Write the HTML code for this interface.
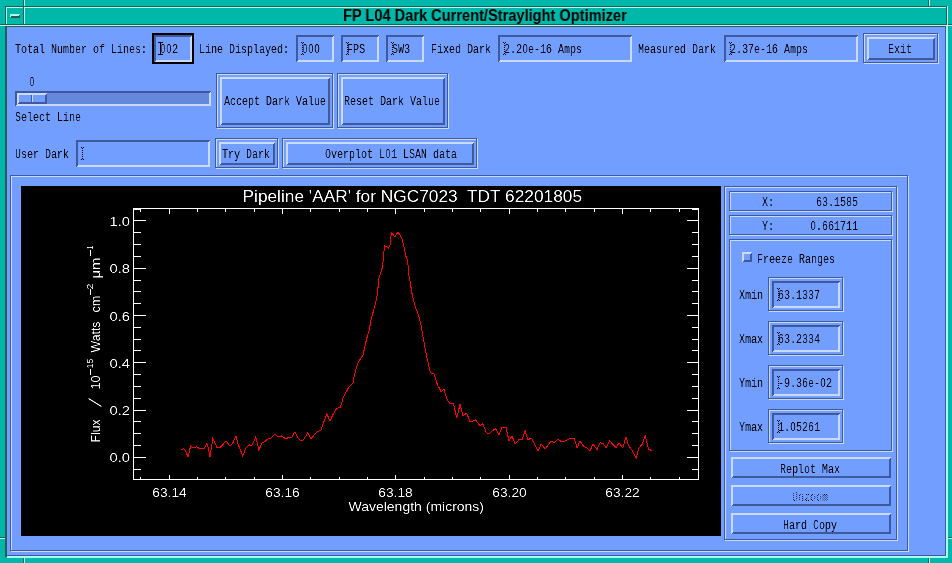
<!DOCTYPE html>
<html><head><meta charset="utf-8"><style>
html,body{margin:0;padding:0;}
body{width:952px;height:563px;overflow:hidden;position:relative;background:#00B8AA;}
body>div{position:absolute;}
.m{font-family:"Liberation Mono",monospace;font-size:13.66px;line-height:16px;white-space:pre;transform-origin:0 0;transform:scaleX(0.7319);will-change:transform;filter:url(#crisp);}
.z{display:inline-block;vertical-align:baseline;line-height:0;width:8.1973px;text-align:center;font-family:"Liberation Sans",sans-serif;font-size:12.5px;}
.w{-webkit-mask-image:conic-gradient(#000 0 25%,transparent 0 50%,#000 0 75%,transparent 0);-webkit-mask-size:2px 2px;mask-image:conic-gradient(#000 0 25%,transparent 0 50%,#000 0 75%,transparent 0);mask-size:2px 2px;}
.w>div{position:absolute;}
.t{font-family:"Liberation Sans",sans-serif;font-weight:bold;font-size:15.5px;line-height:18px;white-space:pre;color:#000;transform-origin:0 0;transform:scale(0.942,1.04);will-change:transform;}
</style></head><body>
<svg width="0" height="0" style="position:absolute"><filter id="crisp" color-interpolation-filters="sRGB"><feComponentTransfer><feFuncA type="linear" slope="1.4" intercept="-0.2"/></feComponentTransfer></filter></svg>
<div style="left:0px;top:0px;width:952px;height:563px;background:#00B8AA;"></div>
<div style="left:23px;top:0px;width:1px;height:6px;background:#2C5A55;"></div>
<div style="left:24px;top:0px;width:1px;height:6px;background:#A8FFF0;"></div>
<div style="left:928px;top:0px;width:1px;height:6px;background:#2C5A55;"></div>
<div style="left:929px;top:0px;width:1px;height:6px;background:#A8FFF0;"></div>
<div style="left:5px;top:6px;width:942px;height:1px;background:#2C5A55;"></div>
<div style="left:6px;top:7px;width:941px;height:1px;background:#A8FFF0;"></div>
<div style="left:5px;top:6px;width:1px;height:19px;background:#2C5A55;"></div>
<div style="left:6px;top:7px;width:1px;height:18px;background:#A8FFF0;"></div>
<div style="left:23px;top:7px;width:1px;height:18px;background:#2C5A55;"></div>
<div style="left:24px;top:7px;width:1px;height:18px;background:#A8FFF0;"></div>
<div style="left:946px;top:6px;width:1px;height:19px;background:#2C5A55;"></div>
<div style="left:947px;top:6px;width:1px;height:552px;background:#A8FFF0;"></div>
<div style="left:0px;top:24px;width:952px;height:1px;background:#2C5A55;"></div>
<div style="left:0px;top:25px;width:952px;height:1px;background:#A8FFF0;"></div>
<div style="left:947px;top:6px;width:1px;height:552px;background:#A8FFF0;"></div>
<div style="left:10px;top:14px;width:10px;height:2px;background:#A8FFF0;"></div>
<div style="left:11px;top:16px;width:9px;height:2px;background:#2C5A55;"></div>
<div style="left:10px;top:16px;width:1px;height:1px;background:#A8FFF0;"></div>
<div style="left:19px;top:15px;width:1px;height:1px;background:#2C5A55;"></div>
<div style="left:5px;top:26px;width:941px;height:1px;background:#2C5A55;"></div>
<div style="left:5px;top:26px;width:2px;height:531px;background:#2C5A55;"></div>
<div style="left:7px;top:27px;width:938px;height:528px;background:#729FFF;"></div>
<div style="left:945px;top:27px;width:1px;height:529px;background:#3E5A9C;"></div>
<div style="left:7px;top:555px;width:939px;height:1px;background:#3E5A9C;"></div>
<div style="left:946px;top:26px;width:1px;height:532px;background:#A8FFF0;"></div>
<div style="left:7px;top:556px;width:941px;height:1px;background:#A8FFF0;"></div>
<div style="left:7px;top:557px;width:941px;height:1px;background:#A8FFF0;"></div>
<div style="left:5px;top:557px;width:2px;height:1px;background:#00B8AA;"></div>
<div style="left:0px;top:538px;width:5px;height:1px;background:#A8FFF0;"></div>
<div style="left:0px;top:537px;width:5px;height:1px;background:#2C5A55;"></div>
<div style="left:948px;top:538px;width:4px;height:1px;background:#A8FFF0;"></div>
<div style="left:948px;top:537px;width:4px;height:1px;background:#2C5A55;"></div>
<div style="left:23px;top:558px;width:1px;height:5px;background:#2C5A55;"></div>
<div style="left:24px;top:558px;width:1px;height:5px;background:#A8FFF0;"></div>
<div style="left:928px;top:558px;width:1px;height:5px;background:#2C5A55;"></div>
<div style="left:929px;top:558px;width:1px;height:5px;background:#A8FFF0;"></div>
<div class="t" style="left:343px;top:6px;">FP L04 Dark Current/Straylight Optimizer</div>
<div class="m" style="left:14.5px;top:42px;color:#000;">Total&nbsp;Number&nbsp;of&nbsp;Lines:</div>
<div style="left:152px;top:33px;width:42px;height:1px;background:#000;"></div>
<div style="left:152px;top:33px;width:1px;height:31px;background:#000;"></div>
<div style="left:153px;top:63px;width:41px;height:1px;background:#000;"></div>
<div style="left:193px;top:34px;width:1px;height:30px;background:#000;"></div>
<div style="left:153px;top:34px;width:40px;height:1px;background:#000;"></div>
<div style="left:153px;top:34px;width:1px;height:29px;background:#000;"></div>
<div style="left:154px;top:62px;width:39px;height:1px;background:#000;"></div>
<div style="left:192px;top:35px;width:1px;height:28px;background:#000;"></div>
<div style="left:154px;top:35px;width:38px;height:1px;background:#3E5A9C;"></div>
<div style="left:154px;top:35px;width:1px;height:27px;background:#3E5A9C;"></div>
<div style="left:155px;top:61px;width:37px;height:1px;background:#CADAFF;"></div>
<div style="left:191px;top:36px;width:1px;height:26px;background:#CADAFF;"></div>
<div style="left:155px;top:36px;width:36px;height:1px;background:#3E5A9C;"></div>
<div style="left:155px;top:36px;width:1px;height:25px;background:#3E5A9C;"></div>
<div style="left:156px;top:60px;width:35px;height:1px;background:#CADAFF;"></div>
<div style="left:190px;top:37px;width:1px;height:24px;background:#CADAFF;"></div>
<div class="m" style="left:159.5px;top:42px;color:#000;"><span class="z">0</span><span class="z">0</span>2</div>
<div style="left:158px;top:42px;width:5px;height:1px;background:#000;"></div>
<div style="left:158px;top:54px;width:5px;height:1px;background:#000;"></div>
<div style="left:160px;top:42px;width:1px;height:13px;background:#000;"></div>
<div class="m" style="left:198.5px;top:42px;color:#000;">Line&nbsp;Displayed:</div>
<div style="left:296px;top:35px;width:38px;height:1px;background:#3E5A9C;"></div>
<div style="left:296px;top:35px;width:1px;height:27px;background:#3E5A9C;"></div>
<div style="left:297px;top:61px;width:37px;height:1px;background:#CADAFF;"></div>
<div style="left:333px;top:36px;width:1px;height:26px;background:#CADAFF;"></div>
<div style="left:297px;top:36px;width:36px;height:1px;background:#3E5A9C;"></div>
<div style="left:297px;top:36px;width:1px;height:25px;background:#3E5A9C;"></div>
<div style="left:298px;top:60px;width:35px;height:1px;background:#CADAFF;"></div>
<div style="left:332px;top:37px;width:1px;height:24px;background:#CADAFF;"></div>
<div class="m" style="left:301.5px;top:42px;color:#000;"><span class="z">0</span><span class="z">0</span><span class="z">0</span></div>
<div style="left:301px;top:42px;width:1px;height:1px;background:#000;"></div>
<div style="left:303px;top:42px;width:1px;height:1px;background:#000;"></div>
<div style="left:302px;top:43px;width:1px;height:1px;background:#000;"></div>
<div style="left:302px;top:45px;width:1px;height:1px;background:#000;"></div>
<div style="left:302px;top:47px;width:1px;height:1px;background:#000;"></div>
<div style="left:302px;top:49px;width:1px;height:1px;background:#000;"></div>
<div style="left:302px;top:51px;width:1px;height:1px;background:#000;"></div>
<div style="left:302px;top:53px;width:1px;height:1px;background:#000;"></div>
<div style="left:301px;top:54px;width:1px;height:1px;background:#000;"></div>
<div style="left:303px;top:54px;width:1px;height:1px;background:#000;"></div>
<div style="left:341px;top:35px;width:38px;height:1px;background:#3E5A9C;"></div>
<div style="left:341px;top:35px;width:1px;height:27px;background:#3E5A9C;"></div>
<div style="left:342px;top:61px;width:37px;height:1px;background:#CADAFF;"></div>
<div style="left:378px;top:36px;width:1px;height:26px;background:#CADAFF;"></div>
<div style="left:342px;top:36px;width:36px;height:1px;background:#3E5A9C;"></div>
<div style="left:342px;top:36px;width:1px;height:25px;background:#3E5A9C;"></div>
<div style="left:343px;top:60px;width:35px;height:1px;background:#CADAFF;"></div>
<div style="left:377px;top:37px;width:1px;height:24px;background:#CADAFF;"></div>
<div class="m" style="left:346.5px;top:42px;color:#000;">FPS</div>
<div style="left:346px;top:42px;width:1px;height:1px;background:#000;"></div>
<div style="left:348px;top:42px;width:1px;height:1px;background:#000;"></div>
<div style="left:347px;top:43px;width:1px;height:1px;background:#000;"></div>
<div style="left:347px;top:45px;width:1px;height:1px;background:#000;"></div>
<div style="left:347px;top:47px;width:1px;height:1px;background:#000;"></div>
<div style="left:347px;top:49px;width:1px;height:1px;background:#000;"></div>
<div style="left:347px;top:51px;width:1px;height:1px;background:#000;"></div>
<div style="left:347px;top:53px;width:1px;height:1px;background:#000;"></div>
<div style="left:346px;top:54px;width:1px;height:1px;background:#000;"></div>
<div style="left:348px;top:54px;width:1px;height:1px;background:#000;"></div>
<div style="left:386px;top:35px;width:38px;height:1px;background:#3E5A9C;"></div>
<div style="left:386px;top:35px;width:1px;height:27px;background:#3E5A9C;"></div>
<div style="left:387px;top:61px;width:37px;height:1px;background:#CADAFF;"></div>
<div style="left:423px;top:36px;width:1px;height:26px;background:#CADAFF;"></div>
<div style="left:387px;top:36px;width:36px;height:1px;background:#3E5A9C;"></div>
<div style="left:387px;top:36px;width:1px;height:25px;background:#3E5A9C;"></div>
<div style="left:388px;top:60px;width:35px;height:1px;background:#CADAFF;"></div>
<div style="left:422px;top:37px;width:1px;height:24px;background:#CADAFF;"></div>
<div class="m" style="left:391.5px;top:42px;color:#000;">SW3</div>
<div style="left:391px;top:42px;width:1px;height:1px;background:#000;"></div>
<div style="left:393px;top:42px;width:1px;height:1px;background:#000;"></div>
<div style="left:392px;top:43px;width:1px;height:1px;background:#000;"></div>
<div style="left:392px;top:45px;width:1px;height:1px;background:#000;"></div>
<div style="left:392px;top:47px;width:1px;height:1px;background:#000;"></div>
<div style="left:392px;top:49px;width:1px;height:1px;background:#000;"></div>
<div style="left:392px;top:51px;width:1px;height:1px;background:#000;"></div>
<div style="left:392px;top:53px;width:1px;height:1px;background:#000;"></div>
<div style="left:391px;top:54px;width:1px;height:1px;background:#000;"></div>
<div style="left:393px;top:54px;width:1px;height:1px;background:#000;"></div>
<div class="m" style="left:430.5px;top:42px;color:#000;">Fixed&nbsp;Dark</div>
<div style="left:498px;top:35px;width:134px;height:1px;background:#3E5A9C;"></div>
<div style="left:498px;top:35px;width:1px;height:27px;background:#3E5A9C;"></div>
<div style="left:499px;top:61px;width:133px;height:1px;background:#CADAFF;"></div>
<div style="left:631px;top:36px;width:1px;height:26px;background:#CADAFF;"></div>
<div style="left:499px;top:36px;width:132px;height:1px;background:#3E5A9C;"></div>
<div style="left:499px;top:36px;width:1px;height:25px;background:#3E5A9C;"></div>
<div style="left:500px;top:60px;width:131px;height:1px;background:#CADAFF;"></div>
<div style="left:630px;top:37px;width:1px;height:24px;background:#CADAFF;"></div>
<div class="m" style="left:503.5px;top:42px;color:#000;">2.2<span class="z">0</span>e-16&nbsp;Amps</div>
<div style="left:503px;top:42px;width:1px;height:1px;background:#000;"></div>
<div style="left:505px;top:42px;width:1px;height:1px;background:#000;"></div>
<div style="left:504px;top:43px;width:1px;height:1px;background:#000;"></div>
<div style="left:504px;top:45px;width:1px;height:1px;background:#000;"></div>
<div style="left:504px;top:47px;width:1px;height:1px;background:#000;"></div>
<div style="left:504px;top:49px;width:1px;height:1px;background:#000;"></div>
<div style="left:504px;top:51px;width:1px;height:1px;background:#000;"></div>
<div style="left:504px;top:53px;width:1px;height:1px;background:#000;"></div>
<div style="left:503px;top:54px;width:1px;height:1px;background:#000;"></div>
<div style="left:505px;top:54px;width:1px;height:1px;background:#000;"></div>
<div class="m" style="left:637.5px;top:42px;color:#000;">Measured&nbsp;Dark</div>
<div style="left:724px;top:35px;width:134px;height:1px;background:#3E5A9C;"></div>
<div style="left:724px;top:35px;width:1px;height:27px;background:#3E5A9C;"></div>
<div style="left:725px;top:61px;width:133px;height:1px;background:#CADAFF;"></div>
<div style="left:857px;top:36px;width:1px;height:26px;background:#CADAFF;"></div>
<div style="left:725px;top:36px;width:132px;height:1px;background:#3E5A9C;"></div>
<div style="left:725px;top:36px;width:1px;height:25px;background:#3E5A9C;"></div>
<div style="left:726px;top:60px;width:131px;height:1px;background:#CADAFF;"></div>
<div style="left:856px;top:37px;width:1px;height:24px;background:#CADAFF;"></div>
<div class="m" style="left:729.5px;top:42px;color:#000;">2.37e-16&nbsp;Amps</div>
<div style="left:729px;top:42px;width:1px;height:1px;background:#000;"></div>
<div style="left:731px;top:42px;width:1px;height:1px;background:#000;"></div>
<div style="left:730px;top:43px;width:1px;height:1px;background:#000;"></div>
<div style="left:730px;top:45px;width:1px;height:1px;background:#000;"></div>
<div style="left:730px;top:47px;width:1px;height:1px;background:#000;"></div>
<div style="left:730px;top:49px;width:1px;height:1px;background:#000;"></div>
<div style="left:730px;top:51px;width:1px;height:1px;background:#000;"></div>
<div style="left:730px;top:53px;width:1px;height:1px;background:#000;"></div>
<div style="left:729px;top:54px;width:1px;height:1px;background:#000;"></div>
<div style="left:731px;top:54px;width:1px;height:1px;background:#000;"></div>
<div style="left:864px;top:34px;width:75px;height:1px;background:#CADAFF;"></div>
<div style="left:864px;top:34px;width:1px;height:30px;background:#CADAFF;"></div>
<div style="left:864px;top:63px;width:75px;height:1px;background:#CADAFF;"></div>
<div style="left:938px;top:34px;width:1px;height:30px;background:#CADAFF;"></div>
<div style="left:863px;top:33px;width:75px;height:1px;background:#3E5A9C;"></div>
<div style="left:863px;top:33px;width:1px;height:30px;background:#3E5A9C;"></div>
<div style="left:863px;top:62px;width:75px;height:1px;background:#3E5A9C;"></div>
<div style="left:937px;top:33px;width:1px;height:30px;background:#3E5A9C;"></div>
<div style="left:867px;top:37px;width:68px;height:1px;background:#CADAFF;"></div>
<div style="left:867px;top:37px;width:1px;height:23px;background:#CADAFF;"></div>
<div style="left:868px;top:59px;width:67px;height:1px;background:#3E5A9C;"></div>
<div style="left:934px;top:38px;width:1px;height:22px;background:#3E5A9C;"></div>
<div style="left:868px;top:38px;width:66px;height:1px;background:#CADAFF;"></div>
<div style="left:868px;top:38px;width:1px;height:21px;background:#CADAFF;"></div>
<div style="left:869px;top:58px;width:65px;height:1px;background:#3E5A9C;"></div>
<div style="left:933px;top:39px;width:1px;height:20px;background:#3E5A9C;"></div>
<div class="m" style="left:887.5px;top:42px;color:#000;">Exit</div>
<div class="m" style="left:28.5px;top:75px;color:#000;"><span class="z">0</span></div>
<div style="left:15px;top:91px;width:196px;height:1px;background:#3E5A9C;"></div>
<div style="left:15px;top:91px;width:1px;height:15px;background:#3E5A9C;"></div>
<div style="left:16px;top:105px;width:195px;height:1px;background:#CADAFF;"></div>
<div style="left:210px;top:92px;width:1px;height:14px;background:#CADAFF;"></div>
<div style="left:16px;top:92px;width:194px;height:1px;background:#3E5A9C;"></div>
<div style="left:16px;top:92px;width:1px;height:13px;background:#3E5A9C;"></div>
<div style="left:17px;top:104px;width:193px;height:1px;background:#CADAFF;"></div>
<div style="left:209px;top:93px;width:1px;height:12px;background:#CADAFF;"></div>
<div style="left:17px;top:93px;width:192px;height:11px;background:#6488DC;"></div>
<div style="left:17px;top:93px;width:30px;height:11px;background:#729FFF;"></div>
<div style="left:17px;top:93px;width:30px;height:1px;background:#CADAFF;"></div>
<div style="left:17px;top:93px;width:1px;height:11px;background:#CADAFF;"></div>
<div style="left:18px;top:103px;width:29px;height:1px;background:#3E5A9C;"></div>
<div style="left:46px;top:94px;width:1px;height:10px;background:#3E5A9C;"></div>
<div style="left:18px;top:94px;width:28px;height:1px;background:#CADAFF;"></div>
<div style="left:18px;top:94px;width:1px;height:9px;background:#CADAFF;"></div>
<div style="left:19px;top:102px;width:27px;height:1px;background:#3E5A9C;"></div>
<div style="left:45px;top:95px;width:1px;height:8px;background:#3E5A9C;"></div>
<div style="left:31px;top:95px;width:1px;height:7px;background:#3E5A9C;"></div>
<div style="left:32px;top:95px;width:1px;height:7px;background:#CADAFF;"></div>
<div class="m" style="left:14.5px;top:110px;color:#000;">Select&nbsp;Line</div>
<div style="left:217px;top:74px;width:117px;height:1px;background:#CADAFF;"></div>
<div style="left:217px;top:74px;width:1px;height:55px;background:#CADAFF;"></div>
<div style="left:217px;top:128px;width:117px;height:1px;background:#CADAFF;"></div>
<div style="left:333px;top:74px;width:1px;height:55px;background:#CADAFF;"></div>
<div style="left:216px;top:73px;width:117px;height:1px;background:#3E5A9C;"></div>
<div style="left:216px;top:73px;width:1px;height:55px;background:#3E5A9C;"></div>
<div style="left:216px;top:127px;width:117px;height:1px;background:#3E5A9C;"></div>
<div style="left:332px;top:73px;width:1px;height:55px;background:#3E5A9C;"></div>
<div style="left:220px;top:77px;width:110px;height:1px;background:#CADAFF;"></div>
<div style="left:220px;top:77px;width:1px;height:48px;background:#CADAFF;"></div>
<div style="left:221px;top:124px;width:109px;height:1px;background:#3E5A9C;"></div>
<div style="left:329px;top:78px;width:1px;height:47px;background:#3E5A9C;"></div>
<div style="left:221px;top:78px;width:108px;height:1px;background:#CADAFF;"></div>
<div style="left:221px;top:78px;width:1px;height:46px;background:#CADAFF;"></div>
<div style="left:222px;top:123px;width:107px;height:1px;background:#3E5A9C;"></div>
<div style="left:328px;top:79px;width:1px;height:45px;background:#3E5A9C;"></div>
<div class="m" style="left:223.5px;top:94px;color:#000;">Accept&nbsp;Dark&nbsp;Value</div>
<div style="left:338px;top:74px;width:111px;height:1px;background:#CADAFF;"></div>
<div style="left:338px;top:74px;width:1px;height:55px;background:#CADAFF;"></div>
<div style="left:338px;top:128px;width:111px;height:1px;background:#CADAFF;"></div>
<div style="left:448px;top:74px;width:1px;height:55px;background:#CADAFF;"></div>
<div style="left:337px;top:73px;width:111px;height:1px;background:#3E5A9C;"></div>
<div style="left:337px;top:73px;width:1px;height:55px;background:#3E5A9C;"></div>
<div style="left:337px;top:127px;width:111px;height:1px;background:#3E5A9C;"></div>
<div style="left:447px;top:73px;width:1px;height:55px;background:#3E5A9C;"></div>
<div style="left:341px;top:77px;width:104px;height:1px;background:#CADAFF;"></div>
<div style="left:341px;top:77px;width:1px;height:48px;background:#CADAFF;"></div>
<div style="left:342px;top:124px;width:103px;height:1px;background:#3E5A9C;"></div>
<div style="left:444px;top:78px;width:1px;height:47px;background:#3E5A9C;"></div>
<div style="left:342px;top:78px;width:102px;height:1px;background:#CADAFF;"></div>
<div style="left:342px;top:78px;width:1px;height:46px;background:#CADAFF;"></div>
<div style="left:343px;top:123px;width:101px;height:1px;background:#3E5A9C;"></div>
<div style="left:443px;top:79px;width:1px;height:45px;background:#3E5A9C;"></div>
<div class="m" style="left:343.5px;top:94px;color:#000;">Reset&nbsp;Dark&nbsp;Value</div>
<div class="m" style="left:14.5px;top:147px;color:#000;">User&nbsp;Dark</div>
<div style="left:76px;top:140px;width:134px;height:1px;background:#3E5A9C;"></div>
<div style="left:76px;top:140px;width:1px;height:27px;background:#3E5A9C;"></div>
<div style="left:77px;top:166px;width:133px;height:1px;background:#CADAFF;"></div>
<div style="left:209px;top:141px;width:1px;height:26px;background:#CADAFF;"></div>
<div style="left:77px;top:141px;width:132px;height:1px;background:#3E5A9C;"></div>
<div style="left:77px;top:141px;width:1px;height:25px;background:#3E5A9C;"></div>
<div style="left:78px;top:165px;width:131px;height:1px;background:#CADAFF;"></div>
<div style="left:208px;top:142px;width:1px;height:24px;background:#CADAFF;"></div>
<div class="m" style="left:81.5px;top:147px;color:#000;"></div>
<div style="left:81px;top:147px;width:1px;height:1px;background:#000;"></div>
<div style="left:83px;top:147px;width:1px;height:1px;background:#000;"></div>
<div style="left:82px;top:148px;width:1px;height:1px;background:#000;"></div>
<div style="left:82px;top:150px;width:1px;height:1px;background:#000;"></div>
<div style="left:82px;top:152px;width:1px;height:1px;background:#000;"></div>
<div style="left:82px;top:154px;width:1px;height:1px;background:#000;"></div>
<div style="left:82px;top:156px;width:1px;height:1px;background:#000;"></div>
<div style="left:82px;top:158px;width:1px;height:1px;background:#000;"></div>
<div style="left:81px;top:159px;width:1px;height:1px;background:#000;"></div>
<div style="left:83px;top:159px;width:1px;height:1px;background:#000;"></div>
<div style="left:216px;top:139px;width:63px;height:1px;background:#CADAFF;"></div>
<div style="left:216px;top:139px;width:1px;height:30px;background:#CADAFF;"></div>
<div style="left:216px;top:168px;width:63px;height:1px;background:#CADAFF;"></div>
<div style="left:278px;top:139px;width:1px;height:30px;background:#CADAFF;"></div>
<div style="left:215px;top:138px;width:63px;height:1px;background:#3E5A9C;"></div>
<div style="left:215px;top:138px;width:1px;height:30px;background:#3E5A9C;"></div>
<div style="left:215px;top:167px;width:63px;height:1px;background:#3E5A9C;"></div>
<div style="left:277px;top:138px;width:1px;height:30px;background:#3E5A9C;"></div>
<div style="left:219px;top:142px;width:56px;height:1px;background:#CADAFF;"></div>
<div style="left:219px;top:142px;width:1px;height:23px;background:#CADAFF;"></div>
<div style="left:220px;top:164px;width:55px;height:1px;background:#3E5A9C;"></div>
<div style="left:274px;top:143px;width:1px;height:22px;background:#3E5A9C;"></div>
<div style="left:220px;top:143px;width:54px;height:1px;background:#CADAFF;"></div>
<div style="left:220px;top:143px;width:1px;height:21px;background:#CADAFF;"></div>
<div style="left:221px;top:163px;width:53px;height:1px;background:#3E5A9C;"></div>
<div style="left:273px;top:144px;width:1px;height:20px;background:#3E5A9C;"></div>
<div class="m" style="left:221.5px;top:147px;color:#000;">Try&nbsp;Dark</div>
<div style="left:283px;top:139px;width:195px;height:1px;background:#CADAFF;"></div>
<div style="left:283px;top:139px;width:1px;height:30px;background:#CADAFF;"></div>
<div style="left:283px;top:168px;width:195px;height:1px;background:#CADAFF;"></div>
<div style="left:477px;top:139px;width:1px;height:30px;background:#CADAFF;"></div>
<div style="left:282px;top:138px;width:195px;height:1px;background:#3E5A9C;"></div>
<div style="left:282px;top:138px;width:1px;height:30px;background:#3E5A9C;"></div>
<div style="left:282px;top:167px;width:195px;height:1px;background:#3E5A9C;"></div>
<div style="left:476px;top:138px;width:1px;height:30px;background:#3E5A9C;"></div>
<div style="left:286px;top:142px;width:188px;height:1px;background:#CADAFF;"></div>
<div style="left:286px;top:142px;width:1px;height:23px;background:#CADAFF;"></div>
<div style="left:287px;top:164px;width:187px;height:1px;background:#3E5A9C;"></div>
<div style="left:473px;top:143px;width:1px;height:22px;background:#3E5A9C;"></div>
<div style="left:287px;top:143px;width:186px;height:1px;background:#CADAFF;"></div>
<div style="left:287px;top:143px;width:1px;height:21px;background:#CADAFF;"></div>
<div style="left:288px;top:163px;width:185px;height:1px;background:#3E5A9C;"></div>
<div style="left:472px;top:144px;width:1px;height:20px;background:#3E5A9C;"></div>
<div class="m" style="left:324.5px;top:147px;color:#000;">Overplot&nbsp;L<span class="z">0</span>1&nbsp;LSAN&nbsp;data</div>
<div style="left:11px;top:176px;width:898px;height:1px;background:#CADAFF;"></div>
<div style="left:11px;top:176px;width:1px;height:376px;background:#CADAFF;"></div>
<div style="left:11px;top:551px;width:898px;height:1px;background:#CADAFF;"></div>
<div style="left:908px;top:176px;width:1px;height:376px;background:#CADAFF;"></div>
<div style="left:10px;top:175px;width:898px;height:1px;background:#3E5A9C;"></div>
<div style="left:10px;top:175px;width:1px;height:376px;background:#3E5A9C;"></div>
<div style="left:10px;top:550px;width:898px;height:1px;background:#3E5A9C;"></div>
<div style="left:907px;top:175px;width:1px;height:376px;background:#3E5A9C;"></div>
<div style="left:21px;top:186px;width:700px;height:350px;background:#000;"></div>
<svg style="position:absolute;left:21px;top:186px" width="700" height="350" viewBox="21 186 700 350"><path d="M133.5 208.5H698.5V479.5H133.5Z M140.5 479.5V476.5 M140.5 208.5V211.5 M169.5 479.5V474.5 M169.5 208.5V213.5 M197.5 479.5V476.5 M197.5 208.5V211.5 M225.5 479.5V476.5 M225.5 208.5V211.5 M254.5 479.5V476.5 M254.5 208.5V211.5 M282.5 479.5V474.5 M282.5 208.5V213.5 M310.5 479.5V476.5 M310.5 208.5V211.5 M339.5 479.5V476.5 M339.5 208.5V211.5 M367.5 479.5V476.5 M367.5 208.5V211.5 M395.5 479.5V474.5 M395.5 208.5V213.5 M424.5 479.5V476.5 M424.5 208.5V211.5 M452.5 479.5V476.5 M452.5 208.5V211.5 M480.5 479.5V476.5 M480.5 208.5V211.5 M509.5 479.5V474.5 M509.5 208.5V213.5 M537.5 479.5V476.5 M537.5 208.5V211.5 M565.5 479.5V476.5 M565.5 208.5V211.5 M594.5 479.5V476.5 M594.5 208.5V211.5 M622.5 479.5V474.5 M622.5 208.5V213.5 M650.5 479.5V476.5 M650.5 208.5V211.5 M679.5 479.5V476.5 M679.5 208.5V211.5 M133.5 469.5H140.5 M698.5 469.5H691.5 M133.5 457.5H145.5 M698.5 457.5H686.5 M133.5 445.5H140.5 M698.5 445.5H691.5 M133.5 433.5H140.5 M698.5 433.5H691.5 M133.5 421.5H140.5 M698.5 421.5H691.5 M133.5 410.5H145.5 M698.5 410.5H686.5 M133.5 398.5H140.5 M698.5 398.5H691.5 M133.5 386.5H140.5 M698.5 386.5H691.5 M133.5 374.5H140.5 M698.5 374.5H691.5 M133.5 362.5H145.5 M698.5 362.5H686.5 M133.5 350.5H140.5 M698.5 350.5H691.5 M133.5 339.5H140.5 M698.5 339.5H691.5 M133.5 327.5H140.5 M698.5 327.5H691.5 M133.5 315.5H145.5 M698.5 315.5H686.5 M133.5 303.5H140.5 M698.5 303.5H691.5 M133.5 291.5H140.5 M698.5 291.5H691.5 M133.5 280.5H140.5 M698.5 280.5H691.5 M133.5 268.5H145.5 M698.5 268.5H686.5 M133.5 256.5H140.5 M698.5 256.5H691.5 M133.5 244.5H140.5 M698.5 244.5H691.5 M133.5 232.5H140.5 M698.5 232.5H691.5 M133.5 220.5H145.5 M698.5 220.5H686.5 M133.5 209.5H140.5 M698.5 209.5H691.5" stroke="#fff" stroke-width="1" fill="none" shape-rendering="crispEdges"/><filter id="ptxt" color-interpolation-filters="sRGB"><feComponentTransfer><feFuncA type="linear" slope="1.5" intercept="-0.35"/></feComponentTransfer></filter><g filter="url(#ptxt)"><text x="242.5" y="202" font-family="Liberation Sans" fill="#fff" font-size="16" textLength="339.5" lengthAdjust="spacingAndGlyphs">Pipeline 'AAR' for NGC7023&#160; TDT 62201805</text><text x="169.5" y="497" font-family="Liberation Sans" fill="#fff" font-size="13" text-anchor="middle" textLength="34.5" lengthAdjust="spacingAndGlyphs">63.14</text><text x="282.5" y="497" font-family="Liberation Sans" fill="#fff" font-size="13" text-anchor="middle" textLength="34.5" lengthAdjust="spacingAndGlyphs">63.16</text><text x="395.5" y="497" font-family="Liberation Sans" fill="#fff" font-size="13" text-anchor="middle" textLength="34.5" lengthAdjust="spacingAndGlyphs">63.18</text><text x="509.5" y="497" font-family="Liberation Sans" fill="#fff" font-size="13" text-anchor="middle" textLength="34.5" lengthAdjust="spacingAndGlyphs">63.20</text><text x="622.5" y="497" font-family="Liberation Sans" fill="#fff" font-size="13" text-anchor="middle" textLength="34.5" lengthAdjust="spacingAndGlyphs">63.22</text><text x="130" y="462" font-family="Liberation Sans" fill="#fff" font-size="13" text-anchor="end" textLength="20.5" lengthAdjust="spacingAndGlyphs">0.0</text><text x="130" y="415" font-family="Liberation Sans" fill="#fff" font-size="13" text-anchor="end" textLength="20.5" lengthAdjust="spacingAndGlyphs">0.2</text><text x="130" y="368" font-family="Liberation Sans" fill="#fff" font-size="13" text-anchor="end" textLength="20.5" lengthAdjust="spacingAndGlyphs">0.4</text><text x="130" y="321" font-family="Liberation Sans" fill="#fff" font-size="13" text-anchor="end" textLength="20.5" lengthAdjust="spacingAndGlyphs">0.6</text><text x="130" y="273" font-family="Liberation Sans" fill="#fff" font-size="13" text-anchor="end" textLength="20.5" lengthAdjust="spacingAndGlyphs">0.8</text><text x="130" y="226" font-family="Liberation Sans" fill="#fff" font-size="13" text-anchor="end" textLength="20.5" lengthAdjust="spacingAndGlyphs">1.0</text><text x="348.5" y="511" font-family="Liberation Sans" fill="#fff" font-size="13" textLength="135.5" lengthAdjust="spacingAndGlyphs">Wavelength (microns)</text><text transform="translate(99.6 442.5) rotate(-90)" font-family="Liberation Sans" fill="#fff" font-size="12.5" textLength="23" lengthAdjust="spacingAndGlyphs">Flux</text><text transform="translate(99.6 389.5) rotate(-90)" font-family="Liberation Sans" fill="#fff" font-size="12.5" textLength="14" lengthAdjust="spacingAndGlyphs">10</text><text transform="translate(99.6 352.5) rotate(-90)" font-family="Liberation Sans" fill="#fff" font-size="12.5" textLength="31" lengthAdjust="spacingAndGlyphs">Watts</text><text transform="translate(99.6 312.5) rotate(-90)" font-family="Liberation Sans" fill="#fff" font-size="12.5" textLength="17" lengthAdjust="spacingAndGlyphs">cm</text><text transform="translate(99.6 278.5) rotate(-90)" font-family="Liberation Sans" fill="#fff" font-size="12.5" textLength="21" lengthAdjust="spacingAndGlyphs">μm</text><text transform="translate(93.3 368.5) rotate(-90)" font-family="Liberation Sans" fill="#fff" font-size="8.5" textLength="10" lengthAdjust="spacingAndGlyphs">15</text><text transform="translate(93.3 289.5) rotate(-90)" font-family="Liberation Sans" fill="#fff" font-size="8.5" textLength="6" lengthAdjust="spacingAndGlyphs">2</text><text transform="translate(93.3 249.5) rotate(-90)" font-family="Liberation Sans" fill="#fff" font-size="8.5" textLength="4" lengthAdjust="spacingAndGlyphs">1</text><path d="M88.5 398.5L101.5 406.5" stroke="#fff" stroke-width="1.1"/><path d="M90.5 369V375M90.5 289V295M90.5 250V256" stroke="#fff" stroke-width="1" shape-rendering="crispEdges"/></g><path d="M180.7 450.0 L183.5 448.7 L185.0 449.8 L188.0 456.9 L190.6 446.0 L193.9 447.9 L196.5 446.8 L200.1 448.9 L204.3 448.9 L206.9 443.2 L208.6 449.3 L210.0 456.9 L212.8 438.9 L214.3 441.3 L217.1 447.9 L219.9 447.9 L226.1 440.8 L229.8 446.0 L232.7 443.2 L236.0 436.1 L238.4 445.1 L242.8 455.9 L245.9 447.9 L249.2 444.9 L251.6 445.8 L255.8 437.0 L258.9 450.0 L262.0 443.2 L264.8 441.6 L267.4 439.4 L271.7 437.6 L274.9 433.9 L278.1 436.9 L281.3 435.8 L285.6 438.7 L287.7 437.9 L291.4 437.9 L294.8 432.0 L297.8 437.6 L301.0 441.1 L303.7 439.4 L307.9 432.8 L311.1 438.7 L316.5 432.3 L318.6 431.2 L321.1 430.1 L324.3 420.6 L326.8 413.8 L330.0 420.9 L332.9 414.6 L336.7 408.3 L340.4 407.1 L341.6 403.4 L342.9 398.4 L345.4 393.4 L349.1 386.6 L353.1 382.8 L354.1 376.6 L355.9 369.2 L357.8 363.6 L359.7 359.8 L362.8 355.5 L364.0 350.5 L366.6 339.0 L369.1 330.3 L371.5 317.8 L374.7 306.6 L376.5 299.2 L377.8 291.7 L378.4 280.2 L380.3 274.0 L382.2 267.8 L383.4 259.7 L384.0 251.0 L384.9 246.0 L386.8 246.6 L388.4 248.1 L390.0 244.8 L390.9 236.0 L391.9 232.9 L394.9 236.9 L398.0 231.9 L400.2 235.2 L402.1 239.2 L403.9 246.6 L405.8 255.9 L407.7 260.9 L408.9 275.2 L410.8 285.2 L411.3 290.5 L415.1 306.6 L418.2 314.1 L421.3 326.5 L423.2 337.7 L426.0 353.3 L426.7 356.7 L428.5 364.2 L430.4 372.9 L434.1 374.1 L437.2 384.1 L441.0 391.5 L444.1 389.3 L446.6 398.4 L450.1 404.0 L453.4 403.4 L456.8 418.3 L460.0 404.2 L463.0 415.6 L466.8 413.1 L470.0 421.9 L475.6 420.0 L480.0 425.7 L482.9 423.8 L486.4 432.7 L488.9 433.9 L493.3 430.1 L495.8 428.9 L499.0 434.5 L502.1 427.0 L505.9 427.0 L509.0 440.9 L512.0 435.8 L515.0 444.0 L519.1 439.6 L522.3 439.6 L525.1 430.8 L528.0 439.6 L531.7 438.1 L538.1 450.9 L541.2 444.0 L545.2 449.0 L551.0 441.1 L554.1 442.7 L558.2 439.0 L561.4 441.9 L564.5 441.5 L568.9 439.0 L574.3 438.7 L577.1 447.8 L580.0 440.9 L583.7 446.5 L586.9 447.8 L590.0 450.9 L592.9 444.0 L597.0 449.7 L600.1 442.7 L603.0 443.6 L606.1 447.8 L609.8 440.9 L616.1 447.8 L619.0 442.7 L622.8 447.8 L626.0 436.8 L628.5 445.3 L632.9 451.6 L636.1 458.3 L638.6 448.4 L642.4 444.0 L645.2 435.8 L648.4 449.0 L652.2 450.9" stroke="#f00" stroke-width="1" fill="none" shape-rendering="crispEdges"/></svg>
<div style="left:725px;top:187px;width:173px;height:1px;background:#CADAFF;"></div>
<div style="left:725px;top:187px;width:1px;height:354px;background:#CADAFF;"></div>
<div style="left:725px;top:540px;width:173px;height:1px;background:#CADAFF;"></div>
<div style="left:897px;top:187px;width:1px;height:354px;background:#CADAFF;"></div>
<div style="left:724px;top:186px;width:173px;height:1px;background:#3E5A9C;"></div>
<div style="left:724px;top:186px;width:1px;height:354px;background:#3E5A9C;"></div>
<div style="left:724px;top:539px;width:173px;height:1px;background:#3E5A9C;"></div>
<div style="left:896px;top:186px;width:1px;height:354px;background:#3E5A9C;"></div>
<div style="left:730px;top:192px;width:163px;height:1px;background:#CADAFF;"></div>
<div style="left:730px;top:192px;width:1px;height:20px;background:#CADAFF;"></div>
<div style="left:730px;top:211px;width:163px;height:1px;background:#CADAFF;"></div>
<div style="left:892px;top:192px;width:1px;height:20px;background:#CADAFF;"></div>
<div style="left:729px;top:191px;width:163px;height:1px;background:#3E5A9C;"></div>
<div style="left:729px;top:191px;width:1px;height:20px;background:#3E5A9C;"></div>
<div style="left:729px;top:210px;width:163px;height:1px;background:#3E5A9C;"></div>
<div style="left:891px;top:191px;width:1px;height:20px;background:#3E5A9C;"></div>
<div class="m" style="left:761.5px;top:195px;color:#000;">X:&nbsp;&nbsp;&nbsp;&nbsp;&nbsp;&nbsp;&nbsp;63.1585</div>
<div style="left:730px;top:216px;width:163px;height:1px;background:#CADAFF;"></div>
<div style="left:730px;top:216px;width:1px;height:20px;background:#CADAFF;"></div>
<div style="left:730px;top:235px;width:163px;height:1px;background:#CADAFF;"></div>
<div style="left:892px;top:216px;width:1px;height:20px;background:#CADAFF;"></div>
<div style="left:729px;top:215px;width:163px;height:1px;background:#3E5A9C;"></div>
<div style="left:729px;top:215px;width:1px;height:20px;background:#3E5A9C;"></div>
<div style="left:729px;top:234px;width:163px;height:1px;background:#3E5A9C;"></div>
<div style="left:891px;top:215px;width:1px;height:20px;background:#3E5A9C;"></div>
<div class="m" style="left:761.5px;top:219px;color:#000;">Y:&nbsp;&nbsp;&nbsp;&nbsp;&nbsp;&nbsp;<span class="z">0</span>.661711</div>
<div style="left:730px;top:240px;width:163px;height:1px;background:#CADAFF;"></div>
<div style="left:730px;top:240px;width:1px;height:212px;background:#CADAFF;"></div>
<div style="left:730px;top:451px;width:163px;height:1px;background:#CADAFF;"></div>
<div style="left:892px;top:240px;width:1px;height:212px;background:#CADAFF;"></div>
<div style="left:729px;top:239px;width:163px;height:1px;background:#3E5A9C;"></div>
<div style="left:729px;top:239px;width:1px;height:212px;background:#3E5A9C;"></div>
<div style="left:729px;top:450px;width:163px;height:1px;background:#3E5A9C;"></div>
<div style="left:891px;top:239px;width:1px;height:212px;background:#3E5A9C;"></div>
<div style="left:742px;top:252px;width:10px;height:1px;background:#CADAFF;"></div>
<div style="left:742px;top:252px;width:1px;height:10px;background:#CADAFF;"></div>
<div style="left:743px;top:261px;width:9px;height:1px;background:#3E5A9C;"></div>
<div style="left:751px;top:253px;width:1px;height:9px;background:#3E5A9C;"></div>
<div style="left:743px;top:253px;width:8px;height:1px;background:#CADAFF;"></div>
<div style="left:743px;top:253px;width:1px;height:8px;background:#CADAFF;"></div>
<div style="left:744px;top:260px;width:7px;height:1px;background:#3E5A9C;"></div>
<div style="left:750px;top:254px;width:1px;height:7px;background:#3E5A9C;"></div>
<div class="m" style="left:756.5px;top:252px;color:#000;">Freeze&nbsp;Ranges</div>
<div class="m" style="left:738.5px;top:288px;color:#000;">Xmin</div>
<div style="left:769px;top:278px;width:75px;height:1px;background:#CADAFF;"></div>
<div style="left:769px;top:278px;width:1px;height:34px;background:#CADAFF;"></div>
<div style="left:769px;top:311px;width:75px;height:1px;background:#CADAFF;"></div>
<div style="left:843px;top:278px;width:1px;height:34px;background:#CADAFF;"></div>
<div style="left:768px;top:277px;width:75px;height:1px;background:#3E5A9C;"></div>
<div style="left:768px;top:277px;width:1px;height:34px;background:#3E5A9C;"></div>
<div style="left:768px;top:310px;width:75px;height:1px;background:#3E5A9C;"></div>
<div style="left:842px;top:277px;width:1px;height:34px;background:#3E5A9C;"></div>
<div style="left:772px;top:281px;width:68px;height:1px;background:#3E5A9C;"></div>
<div style="left:772px;top:281px;width:1px;height:27px;background:#3E5A9C;"></div>
<div style="left:773px;top:307px;width:67px;height:1px;background:#CADAFF;"></div>
<div style="left:839px;top:282px;width:1px;height:26px;background:#CADAFF;"></div>
<div style="left:773px;top:282px;width:66px;height:1px;background:#3E5A9C;"></div>
<div style="left:773px;top:282px;width:1px;height:25px;background:#3E5A9C;"></div>
<div style="left:774px;top:306px;width:65px;height:1px;background:#CADAFF;"></div>
<div style="left:838px;top:283px;width:1px;height:24px;background:#CADAFF;"></div>
<div class="m" style="left:777.5px;top:288px;color:#000;">63.1337</div>
<div style="left:777px;top:288px;width:1px;height:1px;background:#000;"></div>
<div style="left:779px;top:288px;width:1px;height:1px;background:#000;"></div>
<div style="left:778px;top:289px;width:1px;height:1px;background:#000;"></div>
<div style="left:778px;top:291px;width:1px;height:1px;background:#000;"></div>
<div style="left:778px;top:293px;width:1px;height:1px;background:#000;"></div>
<div style="left:778px;top:295px;width:1px;height:1px;background:#000;"></div>
<div style="left:778px;top:297px;width:1px;height:1px;background:#000;"></div>
<div style="left:778px;top:299px;width:1px;height:1px;background:#000;"></div>
<div style="left:777px;top:300px;width:1px;height:1px;background:#000;"></div>
<div style="left:779px;top:300px;width:1px;height:1px;background:#000;"></div>
<div class="m" style="left:738.5px;top:332px;color:#000;">Xmax</div>
<div style="left:769px;top:322px;width:75px;height:1px;background:#CADAFF;"></div>
<div style="left:769px;top:322px;width:1px;height:34px;background:#CADAFF;"></div>
<div style="left:769px;top:355px;width:75px;height:1px;background:#CADAFF;"></div>
<div style="left:843px;top:322px;width:1px;height:34px;background:#CADAFF;"></div>
<div style="left:768px;top:321px;width:75px;height:1px;background:#3E5A9C;"></div>
<div style="left:768px;top:321px;width:1px;height:34px;background:#3E5A9C;"></div>
<div style="left:768px;top:354px;width:75px;height:1px;background:#3E5A9C;"></div>
<div style="left:842px;top:321px;width:1px;height:34px;background:#3E5A9C;"></div>
<div style="left:772px;top:325px;width:68px;height:1px;background:#3E5A9C;"></div>
<div style="left:772px;top:325px;width:1px;height:27px;background:#3E5A9C;"></div>
<div style="left:773px;top:351px;width:67px;height:1px;background:#CADAFF;"></div>
<div style="left:839px;top:326px;width:1px;height:26px;background:#CADAFF;"></div>
<div style="left:773px;top:326px;width:66px;height:1px;background:#3E5A9C;"></div>
<div style="left:773px;top:326px;width:1px;height:25px;background:#3E5A9C;"></div>
<div style="left:774px;top:350px;width:65px;height:1px;background:#CADAFF;"></div>
<div style="left:838px;top:327px;width:1px;height:24px;background:#CADAFF;"></div>
<div class="m" style="left:777.5px;top:332px;color:#000;">63.2334</div>
<div style="left:777px;top:332px;width:1px;height:1px;background:#000;"></div>
<div style="left:779px;top:332px;width:1px;height:1px;background:#000;"></div>
<div style="left:778px;top:333px;width:1px;height:1px;background:#000;"></div>
<div style="left:778px;top:335px;width:1px;height:1px;background:#000;"></div>
<div style="left:778px;top:337px;width:1px;height:1px;background:#000;"></div>
<div style="left:778px;top:339px;width:1px;height:1px;background:#000;"></div>
<div style="left:778px;top:341px;width:1px;height:1px;background:#000;"></div>
<div style="left:778px;top:343px;width:1px;height:1px;background:#000;"></div>
<div style="left:777px;top:344px;width:1px;height:1px;background:#000;"></div>
<div style="left:779px;top:344px;width:1px;height:1px;background:#000;"></div>
<div class="m" style="left:738.5px;top:376px;color:#000;">Ymin</div>
<div style="left:769px;top:366px;width:75px;height:1px;background:#CADAFF;"></div>
<div style="left:769px;top:366px;width:1px;height:34px;background:#CADAFF;"></div>
<div style="left:769px;top:399px;width:75px;height:1px;background:#CADAFF;"></div>
<div style="left:843px;top:366px;width:1px;height:34px;background:#CADAFF;"></div>
<div style="left:768px;top:365px;width:75px;height:1px;background:#3E5A9C;"></div>
<div style="left:768px;top:365px;width:1px;height:34px;background:#3E5A9C;"></div>
<div style="left:768px;top:398px;width:75px;height:1px;background:#3E5A9C;"></div>
<div style="left:842px;top:365px;width:1px;height:34px;background:#3E5A9C;"></div>
<div style="left:772px;top:369px;width:68px;height:1px;background:#3E5A9C;"></div>
<div style="left:772px;top:369px;width:1px;height:27px;background:#3E5A9C;"></div>
<div style="left:773px;top:395px;width:67px;height:1px;background:#CADAFF;"></div>
<div style="left:839px;top:370px;width:1px;height:26px;background:#CADAFF;"></div>
<div style="left:773px;top:370px;width:66px;height:1px;background:#3E5A9C;"></div>
<div style="left:773px;top:370px;width:1px;height:25px;background:#3E5A9C;"></div>
<div style="left:774px;top:394px;width:65px;height:1px;background:#CADAFF;"></div>
<div style="left:838px;top:371px;width:1px;height:24px;background:#CADAFF;"></div>
<div class="m" style="left:777.5px;top:376px;color:#000;">-9.36e-<span class="z">0</span>2</div>
<div style="left:777px;top:376px;width:1px;height:1px;background:#000;"></div>
<div style="left:779px;top:376px;width:1px;height:1px;background:#000;"></div>
<div style="left:778px;top:377px;width:1px;height:1px;background:#000;"></div>
<div style="left:778px;top:379px;width:1px;height:1px;background:#000;"></div>
<div style="left:778px;top:381px;width:1px;height:1px;background:#000;"></div>
<div style="left:778px;top:383px;width:1px;height:1px;background:#000;"></div>
<div style="left:778px;top:385px;width:1px;height:1px;background:#000;"></div>
<div style="left:778px;top:387px;width:1px;height:1px;background:#000;"></div>
<div style="left:777px;top:388px;width:1px;height:1px;background:#000;"></div>
<div style="left:779px;top:388px;width:1px;height:1px;background:#000;"></div>
<div class="m" style="left:738.5px;top:420px;color:#000;">Ymax</div>
<div style="left:769px;top:410px;width:75px;height:1px;background:#CADAFF;"></div>
<div style="left:769px;top:410px;width:1px;height:34px;background:#CADAFF;"></div>
<div style="left:769px;top:443px;width:75px;height:1px;background:#CADAFF;"></div>
<div style="left:843px;top:410px;width:1px;height:34px;background:#CADAFF;"></div>
<div style="left:768px;top:409px;width:75px;height:1px;background:#3E5A9C;"></div>
<div style="left:768px;top:409px;width:1px;height:34px;background:#3E5A9C;"></div>
<div style="left:768px;top:442px;width:75px;height:1px;background:#3E5A9C;"></div>
<div style="left:842px;top:409px;width:1px;height:34px;background:#3E5A9C;"></div>
<div style="left:772px;top:413px;width:68px;height:1px;background:#3E5A9C;"></div>
<div style="left:772px;top:413px;width:1px;height:27px;background:#3E5A9C;"></div>
<div style="left:773px;top:439px;width:67px;height:1px;background:#CADAFF;"></div>
<div style="left:839px;top:414px;width:1px;height:26px;background:#CADAFF;"></div>
<div style="left:773px;top:414px;width:66px;height:1px;background:#3E5A9C;"></div>
<div style="left:773px;top:414px;width:1px;height:25px;background:#3E5A9C;"></div>
<div style="left:774px;top:438px;width:65px;height:1px;background:#CADAFF;"></div>
<div style="left:838px;top:415px;width:1px;height:24px;background:#CADAFF;"></div>
<div class="m" style="left:777.5px;top:420px;color:#000;">1.<span class="z">0</span>5261</div>
<div style="left:777px;top:420px;width:1px;height:1px;background:#000;"></div>
<div style="left:779px;top:420px;width:1px;height:1px;background:#000;"></div>
<div style="left:778px;top:421px;width:1px;height:1px;background:#000;"></div>
<div style="left:778px;top:423px;width:1px;height:1px;background:#000;"></div>
<div style="left:778px;top:425px;width:1px;height:1px;background:#000;"></div>
<div style="left:778px;top:427px;width:1px;height:1px;background:#000;"></div>
<div style="left:778px;top:429px;width:1px;height:1px;background:#000;"></div>
<div style="left:778px;top:431px;width:1px;height:1px;background:#000;"></div>
<div style="left:777px;top:432px;width:1px;height:1px;background:#000;"></div>
<div style="left:779px;top:432px;width:1px;height:1px;background:#000;"></div>
<div style="left:731px;top:457px;width:160px;height:1px;background:#CADAFF;"></div>
<div style="left:731px;top:457px;width:1px;height:21px;background:#CADAFF;"></div>
<div style="left:732px;top:477px;width:159px;height:1px;background:#3E5A9C;"></div>
<div style="left:890px;top:458px;width:1px;height:20px;background:#3E5A9C;"></div>
<div style="left:732px;top:458px;width:158px;height:1px;background:#CADAFF;"></div>
<div style="left:732px;top:458px;width:1px;height:19px;background:#CADAFF;"></div>
<div style="left:733px;top:476px;width:157px;height:1px;background:#3E5A9C;"></div>
<div style="left:889px;top:459px;width:1px;height:18px;background:#3E5A9C;"></div>
<div class="m" style="left:779.5px;top:462px;color:#000;">Replot&nbsp;Max</div>
<div style="left:731px;top:485px;width:160px;height:1px;background:#CADAFF;"></div>
<div style="left:731px;top:485px;width:1px;height:21px;background:#CADAFF;"></div>
<div style="left:732px;top:505px;width:159px;height:1px;background:#3E5A9C;"></div>
<div style="left:890px;top:486px;width:1px;height:20px;background:#3E5A9C;"></div>
<div style="left:732px;top:486px;width:158px;height:1px;background:#CADAFF;"></div>
<div style="left:732px;top:486px;width:1px;height:19px;background:#CADAFF;"></div>
<div style="left:733px;top:504px;width:157px;height:1px;background:#3E5A9C;"></div>
<div style="left:889px;top:487px;width:1px;height:18px;background:#3E5A9C;"></div>
<div class="w" style="left:780px;top:487px;width:60px;height:17px;">
<div class="m" style="left:11.5px;top:3px;color:#000;">Unzoom</div>
</div>
<div style="left:731px;top:513px;width:160px;height:1px;background:#CADAFF;"></div>
<div style="left:731px;top:513px;width:1px;height:21px;background:#CADAFF;"></div>
<div style="left:732px;top:533px;width:159px;height:1px;background:#3E5A9C;"></div>
<div style="left:890px;top:514px;width:1px;height:20px;background:#3E5A9C;"></div>
<div style="left:732px;top:514px;width:158px;height:1px;background:#CADAFF;"></div>
<div style="left:732px;top:514px;width:1px;height:19px;background:#CADAFF;"></div>
<div style="left:733px;top:532px;width:157px;height:1px;background:#3E5A9C;"></div>
<div style="left:889px;top:515px;width:1px;height:18px;background:#3E5A9C;"></div>
<div class="m" style="left:782.5px;top:518px;color:#000;">Hard&nbsp;Copy</div>
</body></html>
